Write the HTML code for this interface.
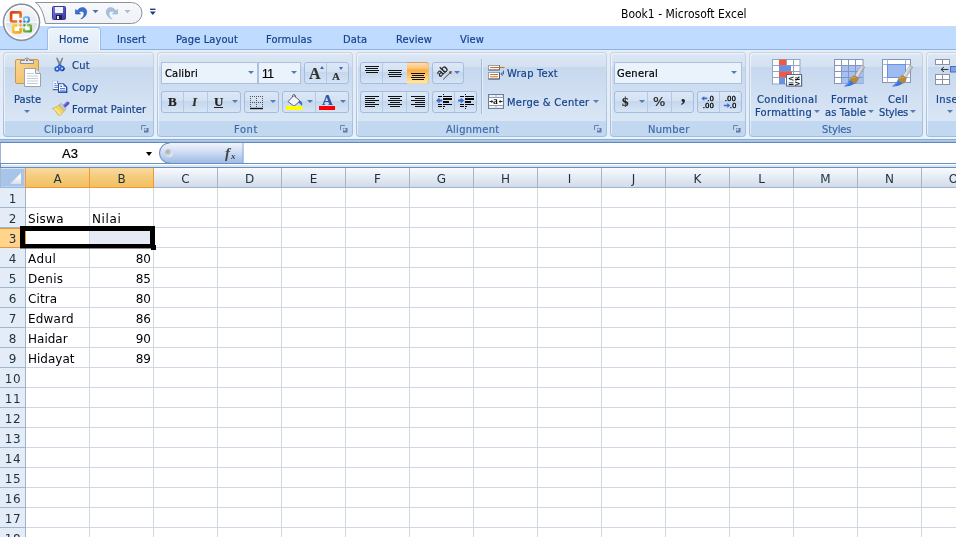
<!DOCTYPE html>
<html>
<head>
<meta charset="utf-8">
<title>Book1 - Microsoft Excel</title>
<style>
html,body{margin:0;padding:0;}
body{width:956px;height:537px;overflow:hidden;position:relative;background:#fff;will-change:transform;font-family:"DejaVu Sans Condensed","DejaVu Sans","Liberation Sans",sans-serif;font-size:11px;color:#15428b;}
div,svg{position:absolute;}
.t,.tab,.glabel{-webkit-text-stroke:0.2px currentColor;}
#title{left:0;top:0;width:956px;height:26px;background:#fff;}
#titletext{left:621px;top:7px;font-size:12px;color:#000;white-space:nowrap;line-height:14px;}
#tabrow{left:0;top:26px;width:956px;height:24px;background:#bfdbff;}
.tab{top:33px;line-height:14px;white-space:nowrap;color:#15428b;font-size:11px;letter-spacing:0.12px;}
#hometab{left:47px;top:27px;width:54px;height:23px;box-sizing:border-box;border:1px solid #9cbdea;border-bottom:none;border-top-color:#8fb4e6;border-radius:4px 4px 0 0;background:linear-gradient(#eef4fc,#e7eff9 50%,#e3ebf6);box-shadow:inset 1px 1px 0 #f3fbff, inset -1px 0 0 #f3fbff;}
#ribbon{left:0;top:49px;width:956px;height:94px;background:linear-gradient(#8db2e3 0px,#8db2e3 1px,#e6edf7 1px,#e3ebf6 30px,#e6effa 88px,#eff5fc 88px,#eff5fc 89px,#d5f7fd 89px,#d5f7fd 90px,#98abcb 90px,#98abcb 91px,#b0c6e8 91px,#b0c6e8 92px,#a8c0e4 92px,#a8c0e4 93px,#6088bc 93px,#6088bc 94px);}
.grp{top:52px;height:85px;border-radius:4px;background:linear-gradient(#c6d3e3 0px,#b9cbe2 40px,#9fbce0 84px);}
.grp::before{content:"";position:absolute;left:1px;top:1px;right:1px;bottom:1px;border-radius:3px;background:linear-gradient(#dde7f5 0px,#d4e1f1 14px,#c7d8ee 14px,#d9e6f5 68px,#c1d8f0 68px,#c1d8f0 83px);box-shadow:inset 1px 1px 0 rgba(255,255,255,0.55);}
.glabel{top:123px;line-height:14px;white-space:nowrap;color:#3e6aaa;font-size:11px;}
.t{white-space:nowrap;line-height:14px;color:#15428b;font-size:11px;}
.btng{box-sizing:border-box;border:1px solid #a3bde0;border-radius:3px;background:linear-gradient(#dde8f6 0%,#d3e1f2 45%,#c5d7ed 46%,#d6e4f5 100%);}
.combo{box-sizing:border-box;border:1px solid #abc1de;background:#eaf2fb;}
.sep{width:1px;background:#b4c9e4;}
.arr{width:0;height:0;border-left:3px solid transparent;border-right:3px solid transparent;border-top:3px solid #567db1;}
#fbar{left:0;top:143px;width:956px;height:25px;background:#fff;}
.cell{font-family:"DejaVu Sans","Liberation Sans",sans-serif;font-size:12px;color:#000;line-height:14px;white-space:nowrap;}
.rh{left:0;width:25px;height:19px;text-align:center;font-family:"DejaVu Sans","Liberation Sans",sans-serif;font-size:12px;color:#1c3040;line-height:22px;background:#e4ecf7;border-bottom:1px solid #9eb6ce;}
.ch{top:168px;width:63px;height:19px;text-align:center;font-family:"DejaVu Sans","Liberation Sans",sans-serif;font-size:12px;color:#1c3040;line-height:23px;background:linear-gradient(#f9fbfd,#e4ebf5 50%,#d3dbe9);border-right:1px solid #9eb6ce;border-bottom:1px solid #9eb6ce;}
.chs{background:linear-gradient(#f9d9a0,#f5cb7a 50%,#f1c15f);border-right:1px solid #f29536;border-bottom:1px solid #f29536;}
</style>
</head>
<body>
<div id="title"><div id="titletext">Book1 - Microsoft Excel</div></div>
<div id="tabrow"></div>
<div id="ribbon"></div>
<div id="hometab"></div>
<div class="tab" style="left:59px">Home</div>
<div class="tab" style="left:117px">Insert</div>
<div class="tab" style="left:176px">Page Layout</div>
<div class="tab" style="left:266px">Formulas</div>
<div class="tab" style="left:343px">Data</div>
<div class="tab" style="left:396px">Review</div>
<div class="tab" style="left:460px">View</div>
<div class="grp" style="left:3px;width:151px"></div>
<div class="grp" style="left:157px;width:196px"></div>
<div class="grp" style="left:356px;width:251px"></div>
<div class="grp" style="left:610px;width:136px"></div>
<div class="grp" style="left:749px;width:174px"></div>
<div class="grp" style="left:926px;width:60px"></div>
<div class="glabel" style="left:44px;letter-spacing:0.30px">Clipboard</div>
<div class="glabel" style="left:234px;letter-spacing:0.60px">Font</div>
<div class="glabel" style="left:446px;letter-spacing:0.30px">Alignment</div>
<div class="glabel" style="left:648px;letter-spacing:0.30px">Number</div>
<div class="glabel" style="left:822px;letter-spacing:-0.10px">Styles</div>
<!-- Office button -->
<svg style="left:0;top:0" width="48" height="46" viewBox="0 0 48 46">
<defs>
<radialGradient id="ob" cx="0.5" cy="0.3" r="0.75"><stop offset="0" stop-color="#ffffff"/><stop offset="0.55" stop-color="#eef1f5"/><stop offset="0.8" stop-color="#d3d9e3"/><stop offset="1" stop-color="#b7bfcd"/></radialGradient>
<linearGradient id="ob2" x1="0" y1="0" x2="0" y2="1"><stop offset="0" stop-color="#f6f7fa"/><stop offset="0.47" stop-color="#e9ecf1"/><stop offset="0.5" stop-color="#ffffff"/><stop offset="0.53" stop-color="#dce1e9"/><stop offset="1" stop-color="#f7f8fb"/></linearGradient>
<linearGradient id="lr" x1="0" y1="0" x2="1" y2="1"><stop offset="0" stop-color="#d6401a"/><stop offset="1" stop-color="#f08c1a"/></linearGradient>
<linearGradient id="ly" x1="0" y1="0" x2="1" y2="1"><stop offset="0" stop-color="#fbd04a"/><stop offset="1" stop-color="#f2a516"/></linearGradient>
<linearGradient id="lb" x1="0" y1="0" x2="1" y2="1"><stop offset="0" stop-color="#7cc3f0"/><stop offset="1" stop-color="#2a7fd0"/></linearGradient>
<linearGradient id="lg" x1="0" y1="0" x2="1" y2="1"><stop offset="0" stop-color="#9ccf5a"/><stop offset="1" stop-color="#4f9a2c"/></linearGradient>
</defs>
<circle cx="21.5" cy="22.6" r="18.8" fill="#aeb6c4" opacity="0.55"/>
<circle cx="21.5" cy="22.2" r="18" fill="url(#ob2)" stroke="#858e9e" stroke-width="1.5"/>
<circle cx="21.5" cy="22.2" r="16.4" fill="none" stroke="#ffffff" stroke-width="1.2" opacity="0.9"/>
<rect x="12" y="13.3" width="7.6" height="7.2" fill="#fff"/><rect x="14.2" y="26.3" width="5.6" height="5.4" fill="#fff"/><rect x="24.6" y="18" width="3.6" height="3.2" fill="#fff"/><rect x="24.8" y="26" width="5.3" height="4.8" fill="#fff"/>
<path d="M17.2 21.5 H12.1 a1 1 0 0 1 -1 -1 V13.3 a1 1 0 0 1 1 -1 H19.600 a1 1 0 0 1 1 1 V17.700" fill="none" stroke="url(#lr)" stroke-width="2.700"/>
<path d="M23.900 19.700 V18.300 a1 1 0 0 1 1 -1 H27.800 a1 1 0 0 1 1 1 V20.800 a1 1 0 0 1 -1 1 H26.600" fill="none" stroke="url(#lb)" stroke-width="2"/>
<path d="M17.200 25.400 H14.200 a1 1 0 0 0 -1 1 V31.400 a1 1 0 0 0 1 1 H19.600 a1 1 0 0 0 1 -1 V28" fill="none" stroke="url(#ly)" stroke-width="2.700"/>
<path d="M27.300 25.300 H29.900 a1 1 0 0 1 1 1 V30.400 a1 1 0 0 1 -1 1 H25 a1 1 0 0 1 -1 -1 V28.400" fill="none" stroke="url(#lg)" stroke-width="2.400"/>
<circle cx="20.5" cy="21.500" r="1.400" fill="#e0531c"/><circle cx="24.400" cy="21.500" r="1.300" fill="#2a86d8"/>
<circle cx="20.500" cy="25.300" r="1.400" fill="#f6b52c"/><circle cx="24.400" cy="25.300" r="1.300" fill="#5aa632"/>
</svg>
<!-- QAT -->
<svg style="left:34px;top:0" width="126" height="27" viewBox="0 0 126 27">
<defs><linearGradient id="qg" x1="0" y1="0" x2="0" y2="1"><stop offset="0" stop-color="#f7f9fc"/><stop offset="1" stop-color="#eef1f6"/></linearGradient>
<linearGradient id="sv" x1="0" y1="0" x2="1" y2="1"><stop offset="0" stop-color="#777be2"/><stop offset="1" stop-color="#35379a"/></linearGradient></defs>
<path d="M1.5 2.5 H97.5 A10.5 10.5 0 0 1 97.5 23.5 H11.5 C9.5 14 7 6 1.5 2.5 Z" fill="url(#qg)" stroke="#8b909b" stroke-width="1"/>
<!-- save -->
<rect x="18.5" y="6.5" width="13" height="13" rx="1" fill="url(#sv)" stroke="#3a3a9a" stroke-width="1"/>
<rect x="21" y="7" width="8" height="6" fill="#f1f3fb"/>
<rect x="22" y="15" width="6" height="4.5" fill="#1c1c40"/><rect x="23" y="16" width="2" height="3" fill="#e8e8f4"/>
<!-- undo -->
<path d="M41.5 9.5 L41.5 14 L46.5 14 L44.8 12.3 C47.5 10.2 51 11.6 49.8 15.2 C49.2 17 48 18.2 46.8 18.8 C50.5 18 53.5 14.5 52.5 10.5 C51.4 6.8 46.2 6.3 43.2 10.8 Z" fill="#3a6fd0" stroke="#2b56ae" stroke-width="0.6"/>
<path d="M58.5 10 h6 l-3 3.2z" fill="#4d6fa8"/>
<!-- redo -->
<path d="M83.5 9.5 L83.5 14 L78.5 14 L80.2 12.3 C77.5 10.2 74 11.6 75.2 15.2 C75.8 17 77 18.2 78.2 18.8 C74.5 18 71.5 14.5 72.5 10.5 C73.6 6.800 78.8 6.3 81.8 10.8 Z" fill="#a8c0e0" stroke="#98b2d6" stroke-width="0.6"/>
<path d="M90.500 10 h6 l-3 3.2z" fill="#b4b8c0"/>
<!-- customize -->
<rect x="116" y="8.6" width="5.5" height="1.4" fill="#1f3f86"/><path d="M115.800 11.6 h6 l-3 3.4z" fill="#1f3f86"/>
</svg>

<!-- ===== Clipboard ===== -->
<svg style="left:13px;top:56px" width="30" height="32" viewBox="0 0 30 32">
<defs><linearGradient id="pb" x1="0" y1="0" x2="1" y2="1"><stop offset="0" stop-color="#fbd894"/><stop offset="1" stop-color="#efb757"/></linearGradient></defs>
<rect x="2.5" y="3.500" width="23" height="24" rx="1.500" fill="url(#pb)" stroke="#c99a4c" stroke-width="1"/>
<path d="M7.5 7.5 v-3 h4 a2.500 2.500 0 0 1 5 0 h4 v3z" fill="#e9e9ee" stroke="#8a8d99" stroke-width="1"/>
<circle cx="14" cy="4.300" r="1" fill="#9a6a2a"/>
<path d="M11.500 12.500 h11 l5 5 v13 h-16z" fill="#ffffff" stroke="#9aa1b0" stroke-width="1"/>
<path d="M22.500 12.500 v5 h5" fill="#e4e8f0" stroke="#9aa1b0" stroke-width="1"/>
<path d="M14 17.500 h7 M14 20 h11 M14 22.500 h11 M14 25 h11 M14 27.500 h11" stroke="#c5cad6" stroke-width="1"/>
</svg>
<div class="t" style="left:14px;top:93px;letter-spacing:0.1px">Paste</div>
<div class="arr" style="left:24px;top:110px"></div>
<!-- scissors -->
<svg style="left:53px;top:56px" width="14" height="17" viewBox="0 0 14 17">
<path d="M3 1.800 L4.600 1.800 L6.800 6.300 L8.900 1.800 L10.300 1.800 L7.600 9.300 L5.900 9.300 Z" fill="#7b838f"/>
<path d="M6.700 8.600 L4.600 11 M6.900 8.600 L8.600 10.600" stroke="#2f5fd0" stroke-width="1.600"/>
<circle cx="4.100" cy="12.900" r="1.900" fill="#dfe7f6" stroke="#2f5fd0" stroke-width="1.700"/>
<circle cx="9" cy="12.500" r="1.800" fill="#dfe7f6" stroke="#2f5fd0" stroke-width="1.700"/>
<path d="M9.200 14.800 a2.400 2.400 0 0 0 2 -2.800" fill="none" stroke="#1a2f70" stroke-width="1"/>
</svg>
<div class="t" style="left:72px;top:59px;letter-spacing:0.3px">Cut</div>
<!-- copy -->
<svg style="left:52px;top:80px" width="17" height="14" viewBox="0 0 17 14">
<path d="M1 1 h4.500 l2.500 2.500 v6 h-7z" fill="#fff" stroke="#b8c4e0" stroke-width="0.800"/>
<path d="M0.800 9.700 h7.400" stroke="#3a4866" stroke-width="1"/><path d="M5.500 1 v2.500 h2.500" fill="none" stroke="#5a6a8a" stroke-width="0.800"/>
<path d="M2.300 3.600 h2 M2.300 5.500 h4.500 M2.300 7.400 h4.500" stroke="#5f92e6" stroke-width="1.100"/>
<path d="M6.500 3.800 h5 l3 3 v5.400 h-8z" fill="#fff" stroke="#2a50aa" stroke-width="1.100"/>
<path d="M14.600 7 v5.300 h-8" fill="none" stroke="#2a50aa" stroke-width="1.500"/><path d="M11.500 3.800 v3 h3z" fill="#3f66c4"/>
<path d="M8 6.400 h2 M8 8.500 h5 M8 10.300 h5" stroke="#4f82e0" stroke-width="1.100"/>
</svg>
<div class="t" style="left:72px;top:81px;letter-spacing:0.3px">Copy</div>
<!-- format painter -->
<svg style="left:52px;top:101px" width="18" height="16" viewBox="0 0 18 16">
<path d="M15.600 2.200 L12 5.400" stroke="#5a50c8" stroke-width="3.400" stroke-linecap="round"/>
<path d="M15.200 1.400 L11.400 4.800" stroke="#8f88e8" stroke-width="1" stroke-linecap="round"/>
<path d="M7 3.900 L9.300 2.300 L14.200 7.900 L12.300 10z" fill="#c9ccd6" stroke="#8a8e9c" stroke-width="0.500"/>
<path d="M0.300 7.500 C2.500 7 4.500 5.800 6.800 4.200 L12.200 10.100 C10.800 12 9.400 13.400 7.700 14.600 C6.800 14.300 6.200 13.900 5.600 13.400 C4.500 11 2.500 8.800 0.300 7.500z" fill="#f1d761" stroke="#c2a23c" stroke-width="0.600"/>
<path d="M2.500 7.800 C4.500 8.500 7 11 8 13.500" fill="none" stroke="#fbeea4" stroke-width="1.200"/>
</svg>
<div class="t" style="left:72px;top:103px;letter-spacing:0.12px">Format Painter</div>
<!-- dialog launchers -->
<svg class="dl" style="left:141px;top:125px" width="8" height="8" viewBox="0 0 8 8"><path d="M0.500 5 V0.500 H5" fill="none" stroke="#6a84ad" stroke-width="1"/><path d="M3 3 h4.500 v4.500 h-4.500z" fill="#5f7aa6"/><path d="M3.500 3.500 h2 v2 h-2z" fill="#dfe9f6"/></svg>
<svg class="dl" style="left:340px;top:125px" width="8" height="8" viewBox="0 0 8 8"><path d="M0.500 5 V0.500 H5" fill="none" stroke="#6a84ad" stroke-width="1"/><path d="M3 3 h4.500 v4.500 h-4.500z" fill="#5f7aa6"/><path d="M3.500 3.500 h2 v2 h-2z" fill="#dfe9f6"/></svg>
<svg class="dl" style="left:594px;top:125px" width="8" height="8" viewBox="0 0 8 8"><path d="M0.500 5 V0.500 H5" fill="none" stroke="#6a84ad" stroke-width="1"/><path d="M3 3 h4.500 v4.500 h-4.500z" fill="#5f7aa6"/><path d="M3.500 3.500 h2 v2 h-2z" fill="#dfe9f6"/></svg>
<svg class="dl" style="left:733px;top:125px" width="8" height="8" viewBox="0 0 8 8"><path d="M0.500 5 V0.500 H5" fill="none" stroke="#6a84ad" stroke-width="1"/><path d="M3 3 h4.500 v4.500 h-4.500z" fill="#5f7aa6"/><path d="M3.500 3.500 h2 v2 h-2z" fill="#dfe9f6"/></svg>

<!-- ===== Font ===== -->
<div class="combo" style="left:161px;top:62px;width:97px;height:22px"></div>
<div class="t" style="left:165px;top:67px;color:#000;letter-spacing:0.2px">Calibri</div>
<div class="arr" style="left:248px;top:71px"></div>
<div class="combo" style="left:258px;top:62px;width:43px;height:22px"></div>
<div class="t" style="left:262px;top:67px;color:#000;font-family:'Liberation Sans',sans-serif;font-size:12px;letter-spacing:-0.5px">11</div>
<div class="arr" style="left:291px;top:71px"></div>
<div class="btng" style="left:304px;top:62px;width:45px;height:22px"></div>
<div class="sep" style="left:326px;top:63px;height:20px"></div>
<div class="t" style="left:309px;top:66px;font-family:'Liberation Serif',serif;font-weight:bold;font-size:16px;color:#333;line-height:16px">A</div>
<div class="t" style="left:332px;top:70px;font-family:'Liberation Serif',serif;font-weight:bold;font-size:11px;color:#333;line-height:12px">A</div>
<div class="arr" style="left:320px;top:66px;border-top:none;border-bottom:3px solid #3f66b8;border-left-width:2.500px;border-right-width:2.500px"></div>
<div class="arr" style="left:339px;top:67px;border-top-color:#3f66b8;border-left-width:2.500px;border-right-width:2.500px"></div>

<div class="btng" style="left:161px;top:91px;width:80px;height:22px"></div>
<div class="sep" style="left:183px;top:92px;height:20px"></div>
<div class="sep" style="left:207px;top:92px;height:20px"></div>
<div class="t" style="left:168px;top:94px;font-family:'Liberation Serif',serif;font-weight:bold;font-size:13px;color:#222;line-height:16px">B</div>
<div class="t" style="left:192px;top:94px;font-family:'Liberation Serif',serif;font-weight:bold;font-style:italic;font-size:13px;color:#333;line-height:16px">I</div>
<div class="t" style="left:214px;top:94px;font-family:'Liberation Serif',serif;font-weight:bold;font-size:13px;color:#222;line-height:16px">U</div>
<div style="left:214px;top:107px;width:9px;height:1px;background:#222"></div>
<div class="arr" style="left:232px;top:100px"></div>

<div class="btng" style="left:244px;top:91px;width:35px;height:22px"></div>
<svg style="left:249px;top:95px" width="15" height="15" viewBox="0 0 15 15"><path d="M1.500 1 V12 M7.500 1 V12 M13.500 1 V12 M1 1.500 H14 M1 7.500 H14" stroke="#555" stroke-width="1" stroke-dasharray="1 1"/><path d="M1 13.500 H14" stroke="#111" stroke-width="1.400"/></svg>
<div class="arr" style="left:270px;top:100px"></div>

<div class="btng" style="left:282px;top:91px;width:67px;height:22px"></div>
<div class="sep" style="left:315px;top:92px;height:20px"></div>
<svg style="left:285px;top:93px" width="20" height="18" viewBox="0 0 20 18">
<path d="M3 8.500 L9 2.500 L15 8 L9 13.200z" fill="#f4f6fa" stroke="#55607a" stroke-width="1"/>
<path d="M7.500 4 C7 0.500 10.800 0.500 10.500 4.500" fill="none" stroke="#55607a" stroke-width="1"/>
<path d="M14.500 7.500 C17.500 8.500 17.800 11 16.800 13 C16 11.500 15 10.500 13 9.500z" fill="#3d6cc4"/>
<rect x="1" y="13" width="16.500" height="4" fill="#ffff00"/>
</svg>
<div class="arr" style="left:307px;top:100px"></div>
<div class="t" style="left:322px;top:92px;font-family:'Liberation Serif',serif;font-weight:bold;font-size:15px;color:#2f55a8;line-height:16px">A</div>
<div style="left:319px;top:106px;width:16px;height:4px;background:#ff0000"></div>
<div class="arr" style="left:340px;top:100px"></div>

<!-- ===== Alignment ===== -->
<div class="btng" style="left:360px;top:62px;width:69px;height:22px"></div>
<div style="left:407px;top:62px;width:22px;height:22px;box-sizing:border-box;border-top:1px solid #c9a57c;border-right:1px solid #e3c28c;border-bottom:1px solid #e9d9a8;border-radius:0 3px 3px 0;background:linear-gradient(#fbdcb4 0%,#fcc57a 26%,#fcab3c 36%,#fdc467 62%,#ffe8a6 100%)"></div>
<div class="sep" style="left:382px;top:63px;height:20px"></div>
<svg style="left:360px;top:62px" width="69" height="22" viewBox="0 0 69 22">
<path d="M5 4.500 h14 M6 6.500 h12 M5 8.500 h14 M6 10.500 h12  M28 8.500 h14 M29 10.500 h12 M28 12.500 h14 M29 14.500 h12  M51 11.500 h14 M52 13.500 h12 M51 15.500 h14 M52 17.500 h12" stroke="#111" stroke-width="1"/>
</svg>
<div class="btng" style="left:432px;top:62px;width:32px;height:22px"></div>
<svg style="left:434px;top:64px" width="20" height="18" viewBox="0 0 20 18">
<text x="0" y="0" transform="translate(6.300,13.600) rotate(-45)" font-family="Liberation Sans, sans-serif" font-size="10.500" fill="#111" stroke="#111" stroke-width="0.250">ab</text>
<path d="M9.200 15.500 L17 7.800" stroke="#5a3c3c" stroke-width="1"/><path d="M17.800 7 l-3.200 0.700 l2.500 2.500z" fill="#5a3c3c"/>
</svg>
<div class="arr" style="left:454px;top:71px"></div>

<div class="btng" style="left:360px;top:91px;width:69px;height:22px"></div>
<div class="sep" style="left:382px;top:92px;height:20px"></div>
<div class="sep" style="left:406px;top:92px;height:20px"></div>
<svg style="left:360px;top:91px" width="69" height="22" viewBox="0 0 69 22">
<path d="M5 5.500 h14 M5 7.500 h10 M5 9.500 h14 M5 11.500 h10 M5 13.500 h14 M5 15.500 h10  M28 5.500 h14 M30 7.500 h10 M28 9.500 h14 M30 11.500 h10 M28 13.500 h14 M30 15.500 h10  M51 5.500 h14 M55 7.500 h10 M51 9.500 h14 M55 11.500 h10 M51 13.500 h14 M55 15.500 h10" stroke="#111" stroke-width="1"/>
</svg>
<div class="btng" style="left:432px;top:91px;width:45px;height:22px"></div>
<div class="sep" style="left:454px;top:92px;height:20px"></div>
<svg style="left:432px;top:91px" width="45" height="22" viewBox="0 0 45 22">
<g fill="#0a0a0a"><rect x="11" y="3" width="1" height="1"/><rect x="11" y="17" width="1" height="1"/>
<rect x="6" y="5" width="4" height="1"/><rect x="11" y="5" width="9" height="1"/>
<rect x="11" y="7" width="9" height="2"/><rect x="11" y="10" width="6" height="2"/>
<rect x="6" y="13" width="4" height="1"/><rect x="11" y="13" width="9" height="1"/>
<rect x="6" y="15" width="4" height="1"/><rect x="11" y="15" width="2" height="1"/></g>
<path d="M4 9.500 l3.300 -2.700 l0.600 1.800 h2.300 v1.800 h-2.300 l-0.600 1.800z" fill="#3d6cd0"/>
<g transform="translate(22,0)" fill="#0a0a0a"><rect x="11" y="3" width="1" height="1"/><rect x="11" y="17" width="1" height="1"/>
<rect x="6" y="5" width="4" height="1"/><rect x="11" y="5" width="9" height="1"/>
<rect x="11" y="7" width="9" height="2"/><rect x="11" y="10" width="6" height="2"/>
<rect x="6" y="13" width="4" height="1"/><rect x="11" y="13" width="9" height="1"/>
<rect x="6" y="15" width="4" height="1"/><rect x="11" y="15" width="2" height="1"/>
<path d="M10.300 9.500 l-3.300 -2.700 l-0.600 1.800 h-2.300 v1.800 h2.300 l0.600 1.800z" fill="#3d6cd0"/></g>
</svg>
<div style="left:481px;top:59px;width:1px;height:55px;background:#a3bbdc"></div>
<div style="left:482px;top:59px;width:1px;height:55px;background:#e3ecf8"></div>
<!-- wrap text -->
<svg style="left:488px;top:64px" width="18" height="17" viewBox="0 0 18 17">
<rect x="0.500" y="1.500" width="11" height="4.500" fill="#fff" stroke="#9aa0ac" stroke-width="1"/>
<path d="M0.500 6 h11 v-4.500" fill="none" stroke="#5f6676" stroke-width="1"/>
<path d="M2 3.500 h14.500" stroke="#c8742a" stroke-width="1.100"/>
<rect x="0.500" y="8.500" width="11" height="6.500" fill="#fff" stroke="#9aa0ac" stroke-width="1"/>
<path d="M0.500 15 h11 v-6.500" fill="none" stroke="#4f5666" stroke-width="1"/>
<path d="M2 10.500 h8 M2 12.800 h8" stroke="#c8742a" stroke-width="1.100"/>
<path d="M15.500 6.500 v3.500 h-1.800 M14.600 8.300 l-1.800 1.700 l1.800 1.700" fill="none" stroke="#4f6290" stroke-width="1"/>
</svg>
<div class="t" style="left:507px;top:67px;letter-spacing:0.25px">Wrap Text</div>
<!-- merge -->
<svg style="left:488px;top:94px" width="17" height="15" viewBox="0 0 17 15">
<rect x="0.500" y="0.500" width="15" height="14" fill="#c9d3e6" stroke="#6f7c98" stroke-width="1"/>
<rect x="1.500" y="1.200" width="5.500" height="1.600" fill="#f4f7fc"/><rect x="9" y="1.200" width="5.500" height="1.600" fill="#f4f7fc"/>
<rect x="1.500" y="12.200" width="5.500" height="1.600" fill="#f4f7fc"/><rect x="9" y="12.200" width="5.500" height="1.600" fill="#f4f7fc"/>
<rect x="1" y="3.700" width="14" height="7.600" fill="#fff"/>
<path d="M0.500 3.500 h15 M0.500 11.500 h15" stroke="#7f8ba3" stroke-width="0.800"/>
<text x="5" y="10.400" font-family="Liberation Serif, serif" font-weight="bold" font-size="9.500" fill="#111">a</text>
<path d="M1.500 7.500 h3.200 M11.300 7.500 h3.200" stroke="#222" stroke-width="1.100"/><path d="M5.200 7.500 l-1.800 -1.700 v3.400z M10.800 7.500 l1.800 -1.700 v3.400z" fill="#222"/>
</svg>
<div class="t" style="left:507px;top:96px;letter-spacing:0.3px">Merge &amp; Center</div>
<div class="arr" style="left:593px;top:100px"></div>

<!-- ===== Number ===== -->
<div class="combo" style="left:614px;top:62px;width:128px;height:22px"></div>
<div class="t" style="left:617px;top:67px;color:#000;letter-spacing:0.3px">General</div>
<div class="arr" style="left:731px;top:71px"></div>
<div class="btng" style="left:614px;top:91px;width:80px;height:22px"></div>
<div class="sep" style="left:647px;top:92px;height:20px"></div>
<div class="sep" style="left:671px;top:92px;height:20px"></div>
<div class="t" style="left:622px;top:94px;font-family:'Liberation Serif',serif;font-weight:bold;font-size:13px;color:#222;line-height:16px">$</div>
<div class="arr" style="left:639px;top:100px"></div>
<div class="t" style="left:653px;top:95px;font-family:'DejaVu Sans',sans-serif;font-size:13px;color:#222;line-height:14px">%</div>
<div class="t" style="left:681px;top:88px;font-family:'Liberation Serif',serif;font-weight:bold;font-size:18px;color:#222;line-height:16px">,</div>
<div class="btng" style="left:697px;top:91px;width:45px;height:22px"></div>
<div class="sep" style="left:719px;top:92px;height:20px"></div>
<svg style="left:697px;top:91px" width="45" height="22" viewBox="0 0 45 22">
<g font-family="DejaVu Sans, sans-serif" font-size="7" fill="#000" stroke="#000" stroke-width="0.300">
<text x="10.300" y="9.700">.0</text><text x="5.800" y="17">.00</text>
<text x="27.800" y="9.700">.00</text><text x="32.800" y="17">.0</text>
</g>
<path d="M4.300 7.400 l3 -2.500 v1.700 h3 v1.600 h-3 v1.700z" fill="#3d6cd0"/>
<path d="M33.300 14.500 l-3 -2.500 v1.700 h-3.500 v1.600 h3.500 v1.700z" fill="#3d6cd0"/>
</svg>
<!-- ===== Styles ===== -->
<svg style="left:771px;top:58px" width="33" height="30" viewBox="0 0 33 30">
<rect x="1.500" y="1.500" width="27.500" height="24.500" fill="#fff" stroke="#93a5c4" stroke-width="1"/>
<path d="M8.500 1.500 v24.500 M15.500 1.500 v24.500 M22.500 1.500 v24.500 M1.500 7.500 h27.500 M1.500 13.500 h27.500 M1.500 19.500 h27.500" stroke="#93a5c4" stroke-width="1"/>
<rect x="8" y="1.500" width="7" height="6" fill="#ee5a44"/>
<rect x="8" y="7.500" width="12" height="6" fill="#6a90e2"/>
<rect x="8" y="13.500" width="13" height="6" fill="#ee5a44"/>
<rect x="8" y="19.500" width="6" height="6.500" fill="#6a90e2"/>
<rect x="16.500" y="17.500" width="15" height="11.500" fill="#7d8698" opacity="0.500"/>
<rect x="15.500" y="16.500" width="15" height="11.500" fill="#f3f7fd" stroke="#5d6b88" stroke-width="1"/>
<g font-family="DejaVu Sans, sans-serif" font-size="7.500" font-weight="bold" fill="#111"><text x="17" y="22.500">&lt;≠</text><text x="17" y="27.700">=&gt;</text></g>
</svg>
<div class="t" style="left:757px;top:93px;letter-spacing:0.42px">Conditional</div>
<div class="t" style="left:755px;top:106px;letter-spacing:0.3px">Formatting</div>
<div class="arr" style="left:814px;top:110px"></div>

<svg style="left:833px;top:58px" width="33" height="30" viewBox="0 0 33 30">
<defs><linearGradient id="bh" x1="0" y1="0" x2="1" y2="0.600"><stop offset="0" stop-color="#fdfdfd"/><stop offset="0.5" stop-color="#e4e6ea"/><stop offset="1" stop-color="#7e848f"/></linearGradient></defs>
<rect x="1.500" y="1.500" width="28.500" height="24" fill="#fff" stroke="#8496ba" stroke-width="1"/>
<rect x="8.500" y="7.500" width="21.500" height="18" fill="#a4c0f4"/>
<path d="M8.500 1.500 v24 M15.500 1.500 v24 M22.500 1.500 v24 M1.500 7.500 h28.500 M1.500 13.500 h28.500 M1.500 19.500 h28.500" stroke="#8496ba" stroke-width="1"/>
<path d="M28.800 7 L31.800 9 L25 20 L21.800 18z" fill="url(#bh)" stroke="#8f949e" stroke-width="0.500"/>
<path d="M21.800 17.600 L25.300 19.900 C25.300 22.300 23.800 24.600 21.600 25.600 L16.800 21.900 C18 19.800 19.800 18.100 21.800 17.600z" fill="#b78a3a" stroke="#8a6426" stroke-width="0.400"/>
<path d="M18 20.300 C19.500 19.300 21 19 22.500 19.500" fill="none" stroke="#d9b66a" stroke-width="0.900"/>
<path d="M16.800 21.900 L21.600 25.600 C19 27.700 15 28.800 10.800 28.500 C13.500 26.600 15.500 24.200 16.800 21.900z" fill="#3f74d8"/>
<path d="M16.500 23.500 C15.500 25.500 14 27 12.500 28" fill="none" stroke="#7aa4ee" stroke-width="0.800"/>
</svg>
<div class="t" style="left:831px;top:93px;letter-spacing:0.35px">Format</div>
<div class="t" style="left:825px;top:106px;letter-spacing:0.15px">as Table</div>
<div class="arr" style="left:868px;top:110px"></div>

<svg style="left:881px;top:58px" width="33" height="30" viewBox="0 0 33 30">
<rect x="1.500" y="1.500" width="28" height="23" fill="#fff" stroke="#8395b2" stroke-width="1"/>
<path d="M6.500 1.500 v23 M24.500 1.500 v23 M1.500 6.500 h28 M1.500 19.500 h28" stroke="#a9b7d0" stroke-width="1"/>
<rect x="6.500" y="6.500" width="18" height="13" fill="#9fbcf2" stroke="#6a92e2" stroke-width="1"/>
<path d="M28.800 7 L31.800 9 L25 20 L21.800 18z" fill="url(#bh)" stroke="#8f949e" stroke-width="0.500"/>
<path d="M21.800 17.600 L25.300 19.900 C25.300 22.300 23.800 24.600 21.600 25.600 L16.800 21.900 C18 19.800 19.800 18.100 21.800 17.600z" fill="#b78a3a" stroke="#8a6426" stroke-width="0.400"/>
<path d="M18 20.300 C19.500 19.300 21 19 22.500 19.500" fill="none" stroke="#d9b66a" stroke-width="0.900"/>
<path d="M16.800 21.900 L21.600 25.600 C19 27.700 15 28.800 10.800 28.500 C13.500 26.600 15.500 24.200 16.800 21.900z" fill="#3f74d8"/>
<path d="M16.500 23.500 C15.500 25.500 14 27 12.500 28" fill="none" stroke="#7aa4ee" stroke-width="0.800"/>
</svg>
<div class="t" style="left:888px;top:93px;letter-spacing:0.4px">Cell</div>
<div class="t" style="left:879px;top:106px;letter-spacing:-0.15px">Styles</div>
<div class="arr" style="left:910px;top:110px"></div>

<!-- Insert (cut off) -->
<svg style="left:934px;top:58px" width="22" height="28" viewBox="0 0 22 28">
<rect x="1.500" y="1.500" width="14" height="5" fill="#fff" stroke="#8a93a8" stroke-width="1"/><path d="M8.500 1.500 v5" stroke="#8a93a8"/>
<rect x="1.500" y="16.500" width="14" height="10" fill="#fff" stroke="#8a93a8" stroke-width="1"/><path d="M8.500 16.500 v10 M1.500 21.500 h14" stroke="#8a93a8"/>
<path d="M7 11.500 h7.500 M7 11.500 l3 -2.500 M7 11.500 l3 2.500" stroke="#333" stroke-width="1" fill="none"/>
<rect x="16.500" y="8.500" width="8" height="5.500" fill="#7f9fe6" stroke="#4d6cb8" stroke-width="1"/>
</svg>
<div class="t" style="left:936px;top:93px;letter-spacing:0.4px">Insert</div>
<div class="arr" style="left:947px;top:110px"></div>
<div id="fbar"></div>
<!-- formula bar -->
<div style="left:0;top:143px;width:1px;height:20px;background:#9db4d6"></div>
<div class="t" style="left:62px;top:147px;color:#000;font-family:'Liberation Sans',sans-serif;font-size:13px;line-height:14px">A3</div>
<div style="left:146px;top:152px;width:0;height:0;border-left:3.500px solid transparent;border-right:3.500px solid transparent;border-top:4px solid #000"></div>
<svg style="left:157px;top:142px" width="90" height="23" viewBox="0 0 90 23">
<defs><linearGradient id="pg" x1="0" y1="0" x2="0" y2="1"><stop offset="0" stop-color="#f1f5fc"/><stop offset="0.400" stop-color="#d3e0f4"/><stop offset="1" stop-color="#9dbbe7"/></linearGradient>
<radialGradient id="dotg" cx="0.350" cy="0.350" r="0.700"><stop offset="0" stop-color="#a4a8b0"/><stop offset="1" stop-color="#eceef2"/></radialGradient></defs>
<path d="M86.500 1 H12.500 A10 10 0 0 0 12.500 21 H86.500 Z" fill="url(#pg)"/>
<path d="M12.500 1 A10 10 0 0 0 12.500 21" fill="none" stroke="#6f90bc" stroke-width="1.100"/>
<path d="M86 1 V21" stroke="#8eaad6" stroke-width="1"/>
<circle cx="11.800" cy="11" r="3.900" fill="url(#dotg)"/>
<text x="68" y="16" font-family="Liberation Serif, serif" font-style="italic" font-weight="bold" font-size="15" fill="#444">f</text>
<text x="74" y="16.500" font-family="Liberation Serif, serif" font-style="italic" font-weight="bold" font-size="9" fill="#444">x</text>
</svg>
<div style="left:0;top:163px;width:956px;height:1px;background:#6a8fbd"></div>
<div style="left:0;top:165px;width:956px;height:2px;background:#d9e6f7"></div>
<div style="left:0;top:163px;width:1px;height:5px;background:#6a8fbd"></div>
<div style="left:0;top:167px;width:956px;height:1px;background:#6a8fbd"></div>
<div id="grid" style="left:0;top:168px;width:956px;height:369px;background:#fff"></div>
<div style="left:26px;top:188px;width:930px;height:349px;background-image:linear-gradient(to right,transparent 63px,#d0d7e5 63px),linear-gradient(to bottom,transparent 19px,#d0d7e5 19px);background-size:64px 20px,64px 20px;"></div>
<div style="left:0;top:188px;width:25px;height:349px;background:#e4ecf7;border-right:1px solid #9eb6ce"></div>
<div class="rh" style="top:188px">1</div>
<div class="rh" style="top:208px">2</div>
<div class="rh" style="top:228px;background:#ffd58d;border-bottom:1px solid #f29536;border-top:1px solid #f29536;height:18px;line-height:20px">3</div>
<div class="rh" style="top:248px">4</div>
<div class="rh" style="top:268px">5</div>
<div class="rh" style="top:288px">6</div>
<div class="rh" style="top:308px">7</div>
<div class="rh" style="top:328px">8</div>
<div class="rh" style="top:348px">9</div>
<div class="rh" style="top:368px;letter-spacing:0.5px;text-indent:1px">10</div>
<div class="rh" style="top:388px;letter-spacing:0.5px;text-indent:1px">11</div>
<div class="rh" style="top:408px;letter-spacing:0.5px;text-indent:1px">12</div>
<div class="rh" style="top:428px;letter-spacing:0.5px;text-indent:1px">13</div>
<div class="rh" style="top:448px;letter-spacing:0.5px;text-indent:1px">14</div>
<div class="rh" style="top:468px;letter-spacing:0.5px;text-indent:1px">15</div>
<div class="rh" style="top:488px;letter-spacing:0.5px;text-indent:1px">16</div>
<div class="rh" style="top:508px;letter-spacing:0.5px;text-indent:1px">17</div>
<div class="rh" style="top:528px;letter-spacing:0.5px;text-indent:1px">18</div>
<div style="left:0;top:168px;width:25px;height:19px;background:#a9c4e9;border-bottom:1px solid #9eb6ce;box-shadow:inset 1px 1px 0 #d5e3f5, inset -1px -1px 0 #b5d3ff"></div>
<div style="left:0;top:168px;width:1px;height:20px;background:#a3b8d2"></div>
<div style="left:25px;top:168px;width:1px;height:20px;background:#f9962d"></div>
<svg style="left:10px;top:173px" width="12" height="12"><defs><linearGradient id="cg" x1="0" y1="0" x2="0" y2="1"><stop offset="0.3" stop-color="#fff"/><stop offset="1" stop-color="#d9dde6"/></linearGradient></defs><path d="M11 0 L11 11 L0 11 Z" fill="url(#cg)"/></svg>
<div class="ch chs" style="left:26px">A</div>
<div class="ch chs" style="left:90px">B</div>
<div class="ch" style="left:154px">C</div>
<div class="ch" style="left:218px">D</div>
<div class="ch" style="left:282px">E</div>
<div class="ch" style="left:346px">F</div>
<div class="ch" style="left:410px">G</div>
<div class="ch" style="left:474px">H</div>
<div class="ch" style="left:538px">I</div>
<div class="ch" style="left:602px">J</div>
<div class="ch" style="left:666px">K</div>
<div class="ch" style="left:730px">L</div>
<div class="ch" style="left:794px">M</div>
<div class="ch" style="left:858px">N</div>
<div class="ch" style="left:922px">O</div>
<div class="cell" style="left:28px;top:212px;letter-spacing:0.3px">Siswa</div>
<div class="cell" style="left:92px;top:212px;letter-spacing:0.6px">Nilai</div>
<div class="cell" style="left:28px;top:252px;letter-spacing:0.4px">Adul</div>
<div class="cell" style="left:90px;width:61px;text-align:right;top:252px">80</div>
<div class="cell" style="left:28px;top:272px;letter-spacing:0.3px">Denis</div>
<div class="cell" style="left:90px;width:61px;text-align:right;top:272px">85</div>
<div class="cell" style="left:28px;top:292px;letter-spacing:0.1px">Citra</div>
<div class="cell" style="left:90px;width:61px;text-align:right;top:292px">80</div>
<div class="cell" style="left:28px;top:312px;letter-spacing:0.2px">Edward</div>
<div class="cell" style="left:90px;width:61px;text-align:right;top:312px">86</div>
<div class="cell" style="left:28px;top:332px;letter-spacing:0.0px">Haidar</div>
<div class="cell" style="left:90px;width:61px;text-align:right;top:332px">90</div>
<div class="cell" style="left:28px;top:352px;letter-spacing:0.0px">Hidayat</div>
<div class="cell" style="left:90px;width:61px;text-align:right;top:352px">89</div>
<div style="left:90px;top:231px;width:61px;height:13px;background:#e5eaf5"></div>
<div style="left:20px;top:226px;width:125px;height:13px;border:5px solid #000;border-bottom-width:4px"></div>
<div style="left:25px;top:231px;width:1px;height:13px;background:#f29536"></div>
<div style="left:151px;top:245px;width:5px;height:5px;background:#000"></div>
<div style="left:20px;top:248px;width:135px;height:1px;background:rgba(0,0,0,0.45)"></div>
</body>
</html>
